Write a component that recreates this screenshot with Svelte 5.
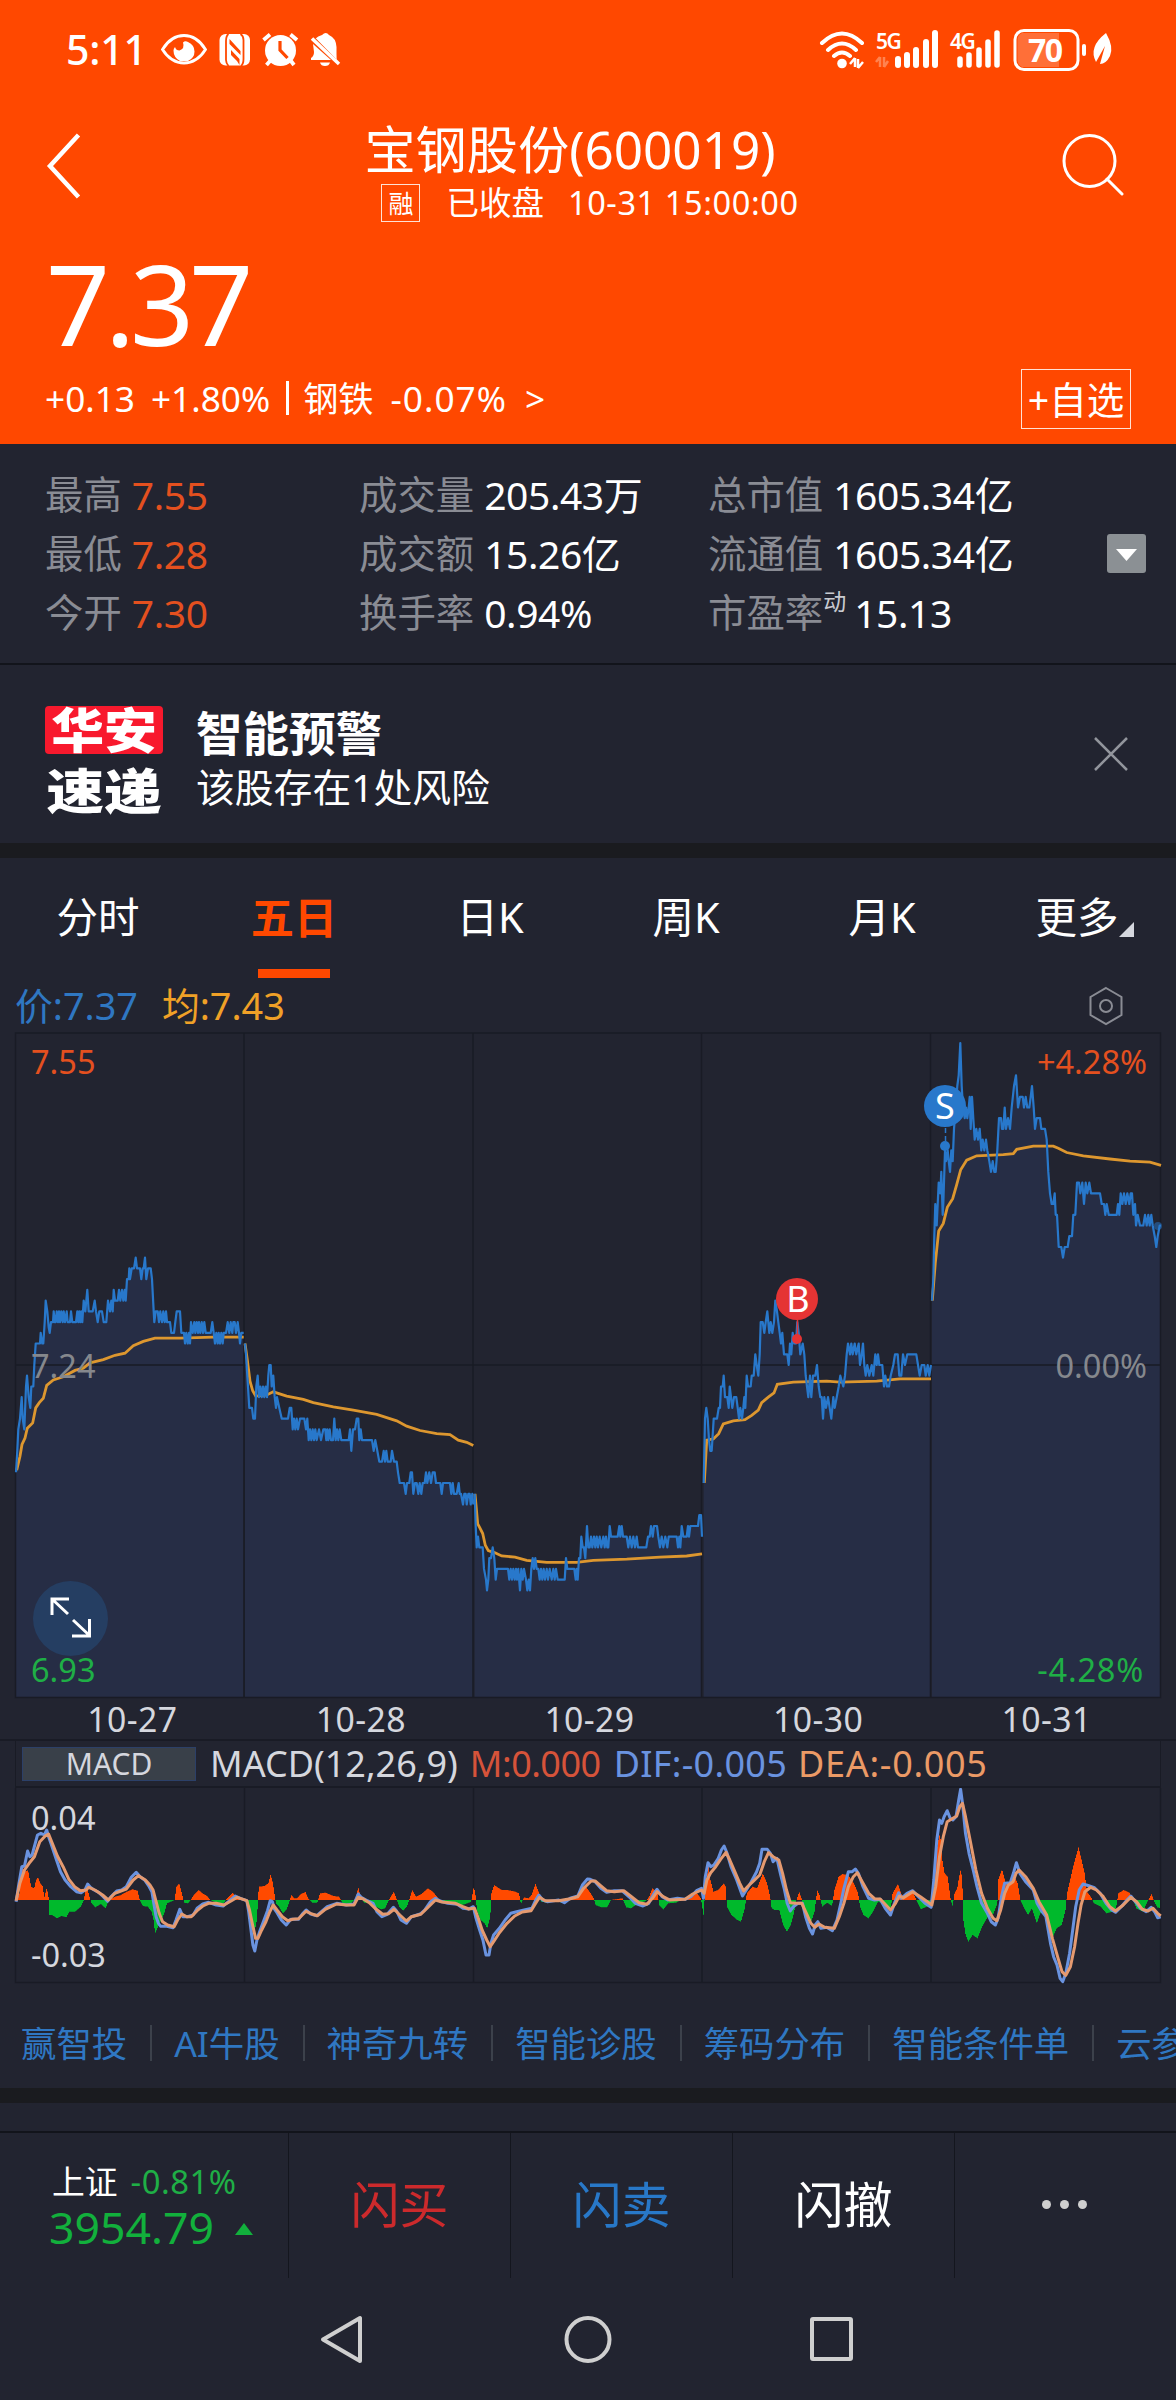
<script lang="ts">
  type Point = [number, number];

  const quotes = [
    [
      { label: '最高', value: '7.55', up: true },
      { label: '最低', value: '7.28', up: true },
      { label: '今开', value: '7.30', up: true },
    ],
    [
      { label: '成交量', value: '205.43万' },
      { label: '成交额', value: '15.26亿' },
      { label: '换手率', value: '0.94%' },
    ],
    [
      { label: '总市值', value: '1605.34亿' },
      { label: '流通值', value: '1605.34亿' },
      { label: '市盈率', sup: '动', value: '15.13' },
    ],
  ];

  const tabs = ['分时', '五日', '日K', '周K', '月K', '更多'];
  const dates = ['10-27', '10-28', '10-29', '10-30', '10-31'];
  const links = ['赢智投', 'AI牛股', '神奇九转', '智能诊股', '筹码分布', '智能条件单', '云参数'];
  let active = $state('五日');

  // "x level" pairs: x in thirds of a pixel, level in cents from the 7.24 base
  const days = [
    {
      from: 0,
      price: '48 -10,52 -8,55 -6,60 -5,65 -3,68 -5,73 -6,78 -2,81 -1,86 -3,91 -4,94 -2,100 -2,103 0,107 2,120 2,122 3,127 2,130 2,134 4,137 6,142 5,146 3.5,149 3,153 4,159 4,161 5,164 4,167 4,170 5,174 4,177 5,180 4,184 5,188 4,191 5,195 4,200 5,203 4,210 4,213 5,217 4,228 4,232 5,235 4,238 5,241 4,244 5,247 4,251 6,256 5,262 7,266 5,278 5,284 6,288 5,293 4,298 5,306 5,311 4,319 4,324 6,330 5,334 6,338 5,341 7,345 6,353 6,357 7,361 6,366 7,370 6,374 7,377 6,381 8,386 8,388 9,390 8,395 9,402 9,407 10,411 9,420 9,424 8,428 9,431 9,435 10,439 8,444 9,452 9,456 8,461 5,463 4,467 5,473 5,477 4,481 5,486 4,490 5,494 4,498 5,501 4,510 4,514 3,522 3,526 4,530 5,540 5,544 3,552 3,555 2,559 3,563 2,567 3,570 2,573 4,578 3,583 4,586 3,590 4,594 3,597 4,601 3,605 4,609 3,613 4,617 3,632 3,637 4,641 3,645 2,649 3,653 2,656 3,660 2,664 3,668 2,671 3,678 3,683 4,688 3,692 4,697 3,700 4,704 4,708 3,713 4,717 3,720 2,724 3,731 3',
      avg: '50 -9.8,60 -8.5,66 -7.4,75 -6.8,82 -5.9,98 -5.4,107 -4,118 -3.5,130 -3.1,140 -1.9,160 -1.4,190 -1.1,225 -.5,250 -.3,270 .2,310 .5,345 .9,375 1.1,400 1.8,430 2.2,465 2.5,540 2.5,640 2.6,731 2.6',
    },
    {
      from: 0,
      price: '735 2,738 1,742 -1,748 -4,756 -4,760 -5,765 -5,769 -2,773 -1,777 -3,781 -2,785 -3,789 -2,793 -3,797 -2,801 -3,805 -1,808 0,812 0,815 -2,820 -1,824 -3,828 -4,831 -3,838 -4,845 -5,864 -5,869 -4,874 -4,878 -6,882 -5,886 -6,890 -5,894 -6,900 -5,913 -5,918 -6,922 -5,926 -7,930 -6,934 -7,938 -6,942 -7,946 -6,950 -7,957 -6,963 -7,970 -6,976 -6,979 -7,982 -6,985 -7,989 -6,993 -7,999 -7,1003 -5,1007 -7,1011 -6,1015 -7,1019 -6,1024 -7,1046 -7,1050 -6,1054 -8,1059 -6,1065 -6,1070 -5,1075 -5,1078 -7,1082 -6,1086 -7,1116 -7,1121 -8,1126 -7,1132 -8,1138 -9,1146 -9,1151 -8,1155 -9,1159 -8,1163 -9,1172 -9,1176 -8,1182 -9,1190 -9,1194 -10,1199 -11,1212 -11,1217 -12,1221 -11,1228 -11,1232 -10,1236 -10,1240 -12,1245 -11,1250 -11,1255 -12,1259 -11,1264 -12,1268 -11,1274 -11,1278 -10,1282 -11,1288 -10,1293 -11,1298 -10,1304 -10,1308 -11,1321 -11,1325 -12,1329 -11,1350 -11,1354 -12,1358 -11,1362 -12,1370 -12,1376 -11,1379 -12,1383 -12,1389 -13,1393 -12,1397 -12,1400 -13,1405 -12,1409 -12,1412 -13,1417 -12,1420 -13',
      avg: '735 2,742 .5,750 -1.5,758 -2.4,767 -2.9,800 -2.8,820 -2.5,860 -2.9,910 -3.2,940 -3.5,1000 -3.9,1060 -4.2,1130 -4.6,1190 -5.2,1220 -5.7,1260 -6.1,1310 -6.4,1350 -6.5,1375 -7,1400 -7.2,1420 -7.5',
    },
    {
      from: 1380,
      price: '44 -12,47 -15,50 -17,54 -16,58 -17,68 -17,72 -19,78 -20,81 -21,85 -20,88 -18,93 -18,98 -17,103 -18,107 -20,111 -19,144 -19,148 -20,152 -19,156 -20,160 -19,164 -20,168 -19,171 -20,175 -19,180 -21,184 -19,188 -20,192 -19,198 -20,202 -21,206 -20,210 -21,214 -19,218 -18,222 -19,226 -18,230 -19,235 -19,239 -20,243 -19,247 -20,251 -19,255 -20,260 -19,264 -20,269 -19,275 -20,280 -19,284 -20,288 -19,293 -20,314 -20,318 -18,322 -19,343 -19,347 -20,350 -19,353 -20,357 -18,361 -18,364 -16,368 -17,372 -17,376 -18,381 -15,385 -17,389 -17,393 -16,397 -17,402 -16,406 -17,410 -16,414 -17,419 -16,424 -17,430 -16,434 -17,438 -16,442 -17,445 -17,449 -15,453 -16,473 -16,478 -15,481 -16,485 -15,489 -16,500 -16,505 -17,510 -16,515 -17,520 -16,525 -17,530 -16,534 -17,559 -17,564 -16,569 -16,573 -15,578 -16,582 -15,591 -15,595 -16,600 -17,605 -16,610 -17,616 -16,622 -17,626 -16,650 -16,654 -17,658 -16,661 -17,665 -15,670 -16,680 -16,684 -15,687 -16,691 -15,714 -15,718 -14,723 -14,726 -16',
      avg: '45 -12,53 -14.8,60 -15.2,68 -15.7,76 -16.8,85 -17.3,105 -17.5,125 -17.8,165 -17.9,200 -18.2,260 -18.4,350 -18.4,400 -18.2,500 -18.1,600 -17.9,680 -17.8,726 -17.6',
    },
    {
      from: 1380,
      price: '731 -11,735 -5,739 -4,743 -5,747 -7,751 -8,755 -8,761 -5,771 -5,776 -4,780 -4,783 -2,788 -2,791 -1,795 -3,802 -3,806 -4,809 -2,813 -3,817 -4,822 -3,829 -3,833 -4,837 -5,841 -4,846 -5,850 -4,853 -3,856 -4,860 -1,864 -2,872 -2,875 -1,881 -1,886 1,890 0,895 -1,899 1,902 4,908 4,913 3,917 4,922 5,928 3,932 4,937 3,942 4,946 6,951 5,955 4,959 3,963 2,967 3,972 1,982 1,986 0,990 2,994 1,998 3,1003 2,1008 2,1012 4,1016 3,1021 1,1028 2,1033 1,1037 -1,1041 -2,1045 -3,1050 -1,1054 -3,1059 -1,1066 -1,1071 0,1076 -2,1081 -3,1085 -3,1089 -5,1093 -3,1098 -4,1104 -3,1109 -4,1114 -5,1120 -3,1124 -4,1130 -3,1136 -2,1141 -1,1150 -2,1155 -1,1160 1,1164 2,1170 1,1174 2,1178 1,1184 2,1189 1,1196 2,1200 0,1205 1,1209 2,1213 0,1217 -1,1222 0,1228 -1,1235 0,1240 -1,1246 1,1250 0,1254 1,1258 0,1267 0,1272 -2,1276 -1,1281 -2,1287 -2,1292 -1,1300 0,1305 1,1313 1,1318 -1,1324 -1,1329 1,1335 0,1342 1,1369 1,1374 0,1379 -1,1385 0,1393 0,1397 -1,1403 0,1408 -1,1413 0',
      avg: '733 -11,740 -7,760 -6.9,776 -6.4,790 -5.5,820 -5.2,855 -5.1,875 -4.7,895 -4.2,905 -3.5,925 -3,942 -2.6,952 -1.8,1000 -1.6,1100 -1.5,1140 -1.6,1250 -1.5,1320 -1.3,1413 -1.3',
    },
    {
      from: 2640,
      price: '156 6,160 8,163 12,166 15,170 13,173 15,176 17,181 16,184 18,188 14,190 15,195 20,198 19,203 20,206 19,210 18,214 20,218 19,222 22,227 24,232 26,236 27,241 30,245 26,249 24,254 23,258 24,262 23,266 24,269 25,272 22,276 25,280 23,284 21,289 22,294 21,299 22,304 20,308 21,313 20,318 21,322 20,328 19,333 18,338 19,343 18,347 18,352 20,357 23,363 23,366 22,370 22,374 24,378 22,384 23,390 22,395 24,402 26,408 27,414 24,420 25,428 25,432 24,437 25,442 24,448 24,452 25,456 26,461 24,465 22,470 23,480 23,484 22,495 22,500 21,505 18,510 16,515 15,520 15,524 16,527 14,531 14,536 11,544 11,549 10,554 11,563 11,568 12,576 12,580 14,586 14,591 17,597 17,601 16,607 17,612 15,617 17,622 16,628 17,633 16,660 16,665 15,672 15,676 14,680 15,686 14,710 14,714 15,718 14,722 16,727 15,732 16,737 15,742 16,748 15,752 16,756 16,760 14,765 15,768 13,773 14,780 13,790 13,795 14,800 13,805 14,809 13,814 14,818 13,824 12,829 11,833 12,839 13,843 13',
      avg: '157 6,166 9.5,176 12.5,190 13.2,202 14.7,218 15.5,230 16.8,242 18.2,260 19.1,290 19.5,370 19.6,400 19.7,410 20.1,460 20.4,520 20.4,535 20.2,560 19.8,610 19.5,690 19.2,750 19,810 18.9,843 18.6',
    },
  ];

  const difLeft = '42 635,48 590,57 530,64 528,72 483,78 500,84 495,92 460,98 435,107 430,116 435,122 420,127 440,133 460,146 505,158 545,170 570,185 590,200 605,212 608,222 600,229 582,236 592,246 600,258 607,270 620,281 634,292 618,305 603,318 600,330 590,343 562,356 547,366 560,378 570,390 590,397 605,402 640,408 680,414 700,420 709,436 709,452 713,460 690,470 658,478 680,490 680,505 675,515 655,530 642,545 637,565 645,583 648,600 632,615 618,628 625,645 632,650 665,656 720,661 765,666 783,672 748,680 720,690 690,699 662,706 632,712 635,716 655,724 668,735 690,748 705,760 688,780 688,790 672,800 660,812 672,828 677,840 665,855 650,880 640,905 645,925 642,936 612,944 622,960 632,975 640,985 665,998 680,1012 673,1028 652,1036 662,1048 690,1062 700,1075 680,1098 672,1110 660,1125 635,1138 625,1150 633,1170 640,1195 643,1210 655,1225 657,1237 650,1243 680,1252 715,1262 750,1270 795,1278 795,1283 760,1290 735,1305 715,1320 690,1335 670,1350 665,1370 660,1390 655,1400 630,1408 615,1418 630,1430 635,1460 630,1475 638,1490 625,1510 618,1522 585,1535 567';
  const difRight = '37 568,50 575,65 595,80 607,100 602,120 602,140 622,155 640,175 648,190 640,205 608,212 598,225 620,240 630,265 625,285 628,300 620,315 602,328 595,333 625,338 560,345 518,352 530,360 525,372 505,380 480,387 468,395 490,405 530,420 570,435 618,445 600,458 575,472 545,480 520,486 478,500 478,508 490,515 515,525 505,535 555,545 600,552 640,560 663,568 650,580 640,592 640,600 680,610 715,618 732,625 705,632 695,640 715,655 712,670 722,682 690,692 640,700 595,712 545,722 545,730 537,738 550,750 590,765 625,780 630,795 628,808 655,822 675,832 640,843 608,850 625,865 610,880 602,895 620,912 640,928 652,935 570,943 450,950 390,956 400,962 380,970 362,978 385,985 390,993 380,1000 330,1005 298,1010 340,1018 430,1027 490,1038 540,1048 590,1060 640,1075 670,1085 695,1096 705,1103 685,1112 620,1120 580,1135 578,1143 550,1151 518,1160 550,1175 575,1195 600,1205 640,1215 660,1228 680,1240 760,1248 800,1257 825,1265 865,1272 875,1280 850,1290 790,1298 720,1306 650,1315 600,1325 582,1340 587,1355 593,1370 610,1385 640,1400 660,1410 667,1425 650,1440 630,1450 618,1462 635,1475 655,1490 665,1503 652,1512 665,1520 683,1528 680';
  const deaLeft = '42 632,52 580,64 540,76 520,90 500,104 455,118 438,127 432,135 455,150 498,165 530,180 568,195 590,210 602,225 600,232 592,248 600,268 615,283 630,300 610,330 597,348 570,362 557,380 570,392 585,400 600,408 635,416 670,425 695,438 705,455 710,464 690,475 672,488 680,500 680,515 662,530 648,545 640,565 640,585 645,605 632,620 622,645 632,652 660,660 705,668 745,674 745,684 720,695 695,705 665,714 645,724 660,738 680,752 692,765 688,780 686,800 664,815 672,830 677,850 658,880 642,905 645,925 645,936 622,948 626,965 638,980 655,1000 673,1015 671,1030 658,1045 675,1062 693,1075 680,1100 673,1120 650,1138 630,1155 636,1190 640,1210 650,1225 657,1240 655,1250 685,1260 720,1272 750,1281 770,1290 755,1305 728,1325 700,1345 678,1365 666,1388 662,1400 640,1410 622,1425 632,1460 632,1490 626,1510 620,1525 595,1545 573';
  const deaRight = '50 573,65 588,80 602,100 605,125 602,145 620,165 638,185 643,200 625,212 605,228 620,245 630,285 628,305 612,328 600,335 610,342 570,352 548,365 530,378 508,392 487,402 510,415 545,428 580,438 603,450 588,465 572,480 555,492 515,503 488,515 500,530 510,540 550,550 600,560 638,575 640,590 640,602 670,614 700,624 712,635 702,650 712,675 715,688 680,700 640,712 590,725 560,735 548,748 575,765 610,780 626,795 627,810 645,822 660,835 640,845 618,855 624,880 605,900 620,930 645,940 590,950 500,960 440,970 395,985 385,995 378,1003 350,1010 340,1018 380,1030 450,1045 540,1060 610,1075 655,1090 685,1100 692,1110 660,1120 610,1130 585,1142 575,1150 550,1158 540,1175 560,1195 595,1210 635,1230 675,1245 745,1260 805,1270 845,1280 856,1292 830,1303 770,1312 700,1320 645,1330 605,1345 592,1360 600,1378 620,1395 650,1410 663,1430 645,1450 622,1465 635,1480 658,1495 663,1508 655,1520 670,1528 678';
  const histLeft = '42 0,50 20,56 100,66 85,72 90,80 40,88 35,93 60,98 68,104 50,111 40,114 5,121 37,126 5,128 -45,135 -45,148 -55,160 -48,172 -52,180 -35,195 -35,210 -20,218 0,222 30,228 30,233 8,238 -10,248 -22,262 -12,275 -25,283 0,300 10,315 15,330 25,345 32,358 28,364 0,372 -18,385 -20,395 -35,400 -60,404 -100,412 -80,420 -60,428 -40,435 -10,445 -5,455 0,460 40,467 50,474 20,480 -8,490 -10,497 0,505 15,518 30,530 18,540 12,548 0,565 -8,583 -10,592 5,607 22,616 8,630 2,645 -3,650 -40,656 -80,664 -95,670 -60,673 0,675 40,690 42,700 50,706 77,712 50,717 10,720 -10,728 -20,738 -40,748 -28,755 -5,760 15,768 5,775 5,785 18,797 24,804 5,815 -8,828 -8,835 20,850 22,870 12,885 10,893 -8,905 -12,918 -8,928 5,935 38,941 10,950 -8,965 -8,980 -20,995 -28,1005 -25,1015 0,1028 25,1036 0,1042 -20,1052 -32,1062 -20,1068 0,1076 30,1086 10,1100 18,1117 35,1130 25,1142 8,1150 -5,1175 -8,1195 -12,1205 -15,1220 -10,1230 -5,1237 40,1242 10,1245 -30,1255 -60,1265 -70,1272 -85,1280 -50,1283 20,1290 45,1310 30,1325 30,1345 25,1355 20,1360 -12,1368 8,1380 5,1388 15,1398 48,1406 25,1412 -5,1430 -8,1450 -3,1475 -10,1490 8,1505 5,1515 20,1530 40';
  const histRight = '37 20,45 5,50 -15,65 -22,80 -22,90 0,120 5,130 -22,142 -25,155 -15,170 -8,182 -2,190 10,198 35,212 22,216 -15,227 -28,240 -10,260 -8,280 5,300 12,315 20,325 5,332 -45,337 40,345 100,350 60,358 25,370 30,385 50,390 40,393 -20,405 -45,420 -60,430 -65,440 -25,445 20,460 40,472 35,487 80,498 50,506 10,510 -25,518 -30,530 -30,540 -75,550 -95,560 -75,568 -40,575 0,582 25,588 5,595 -30,605 -75,615 -60,622 -35,626 0,629 30,635 15,642 -20,655 -8,668 -18,674 30,685 70,695 78,710 75,725 50,736 20,741 -20,750 -45,763 -55,775 -35,788 -5,800 -10,812 -25,822 -20,826 20,840 48,850 15,865 15,880 22,888 0,900 -28,915 -20,928 -15,932 30,938 120,946 180,950 200,956 120,962 80,970 70,978 0,983 -18,988 20,995 35,1000 70,1005 95,1009 30,1011 -60,1017 -105,1024 -125,1035 -105,1048 -115,1060 -80,1075 -50,1090 -40,1100 -10,1102 60,1112 92,1122 50,1135 50,1145 70,1153 50,1160 0,1170 -25,1180 -45,1190 -25,1203 -70,1212 -40,1225 -40,1235 -90,1245 -110,1255 -85,1268 -75,1278 -30,1282 20,1290 60,1298 100,1305 130,1312 158,1320 120,1328 80,1334 25,1345 8,1352 -10,1370 -20,1385 -40,1400 -35,1410 -25,1416 20,1430 30,1445 22,1455 0,1463 -25,1480 -35,1492 -5,1503 18,1510 -5,1518 -22,1528 -25';

  const parse = (s: string): Point[] => s.split(',').map((p) => p.split(' ').map(Number) as Point);
  const toPath = (pts: Point[]) => 'M' + pts.map(([x, y]) => `${x.toFixed(1)} ${y.toFixed(1)}`).join('L');

  // price chart: 10.73px for each cent, base line at 333
  const scaleDay = (s: string, from: number): Point[] =>
    parse(s).map(([x, v]) => [(x + from) / 3, 333 - v * 10.73]);

  const lines = days.map((d) => {
    const pts = scaleDay(d.price, d.from);
    return {
      price: toPath(pts),
      area: `${toPath(pts)}V665H${pts[0][0].toFixed(1)}Z`,
      avg: toPath(scaleDay(d.avg, d.from)),
    };
  });

  // MACD pane: both halves share one scale, zero line at 112
  const K = 1568 / 600;
  const join = (l: string, r: string): Point[] => [
    ...parse(l).map(([x, v]): Point => [x / K, v]),
    ...parse(r).map(([x, v]): Point => [576 + x / K, v]),
  ];
  const macdLine = (l: string, r: string) => toPath(join(l, r).map(([x, v]) => [x, 112 + (v - 630) / 3]));

  const dif = macdLine(difLeft, difRight);
  const dea = macdLine(deaLeft, deaRight);

  const hist = join(histLeft, histRight);
  let bull = '';
  let bear = '';
  let seg = 0;
  for (let x = 16; x < 1160; x++) {
    while (seg < hist.length - 2 && hist[seg + 1][0] < x) seg++;
    const [x0, v0] = hist[seg];
    const [x1, v1] = hist[seg + 1];
    const v = (v0 + ((v1 - v0) * (x - x0)) / (x1 - x0)) / 3;
    const bar = `M${x} 112v${(-v).toFixed(1)}h1V112z`;
    if (v > 0) bull += bar;
    else bear += bar;
  }

  const grid = [244, 473, 701.5, 930.5];
</script>

<main>
  <header>
    <div class="status">
      <span class="clock">5:11</span>
      <svg class="sys" width="182" height="40" viewBox="0 0 182 40" fill="none" stroke="#fff">
        <path d="M2.500 19.500Q11 5.500 24 5.500T45.500 19.500Q37 33 24 33T2.500 19.500Z" stroke-width="2.800" />
        <path d="M23 12.500Q25 10.500 28 12Q34.500 15 34.500 21.500T28 31H20Q13.500 27.500 13.500 20.500Q13.500 18.500 15 17Q16 20.500 19.500 20.500Q25 18.500 23 12.500Z" fill="#fff" stroke="none" />
        <rect x="59.500" y="4" width="30.500" height="31.500" rx="6" fill="#fff" stroke="none" />
        <path d="M68.500 4Q66 6 66 11V30Q66 33 68.500 36M80.500 4Q83.500 6 83.500 10V29Q83.500 34 81 36" stroke="#ff4800" stroke-width="1.800" />
        <path d="M69.500 9L80.500 21V25L69.500 14ZM71 20L79.500 29V35L77 31L71 25Z" fill="#ff4800" stroke="none" />
        <circle cx="120.500" cy="20.500" r="15.500" fill="#fff" stroke="none" />
        <path d="M103.500 10L110 4.500M137 10L130.500 4.500M110 31L106.500 35M131 31L134 35" stroke-width="3.800" />
        <path d="M120 11V20L127.500 28" stroke="#ff4800" stroke-width="3.200" />
        <path d="M155 9L178 32Q176 29 176.500 24V17Q176 8 169 5Q166 1 162 5Q158 6 155 9Z M153 14L171 30H151V28Q154 26 154 22Z M160 32.500H170Q169 36 165 36T160 32.500Z" fill="#fff" stroke="none" />
        <path d="M154 8L181 35.500" stroke="#ff4800" stroke-width="2" />
        <path d="M152 8.500L179 34" stroke-width="3.500" />
      </svg>
      <svg class="sys right" width="296" height="44" viewBox="0 0 296 44" fill="none" stroke="#fff">
        <path d="M3 15Q23 -4 43 15M9 22Q23 9 37 22M15 28Q23 21 31 28" stroke-width="4" stroke-linecap="round" />
        <circle cx="23" cy="35.500" r="4.800" fill="#fff" stroke="none" />
        <path d="M36 30V39M31 36L36 30M39 40V31M39 40L44 34" stroke-width="2.500" />
        <path d="M61 29V39M57 34L61 29M65 39V29M65 39L69 33" stroke="#ff8350" stroke-width="2.500" />
        <path d="M79 31V37M88 27V37M97 22V37M107 14V37M116 5V37" stroke-width="6" stroke-linecap="round" />
        <path d="M141 31V37M150 27V37M160 22V37M169 14V37M178 5V37" stroke-width="5.500" stroke-linecap="round" />
        <rect x="196" y="2.500" width="63" height="39" rx="9" stroke-width="3" />
        <path d="M203 5H240V39H203Q198.500 37 198.500 32V12Q198.500 7 203 5Z" fill="#ff6f38" stroke="none" />
        <path d="M265 18V26" stroke-width="4" stroke-linecap="round" />
        <path d="M287 5Q295 19 291 28Q287 36 281 36L286 18L277 34Q269 19 287 5Z" fill="#fff" stroke="none" />
        <text x="57" y="21" class="net">5G</text>
        <text x="131" y="21" class="net">4G</text>
        <text x="209" y="34" class="batt">70</text>
      </svg>
    </div>

    <div class="title-bar">
      <svg width="36" height="66" viewBox="0 0 36 66" fill="none" stroke="#fff" stroke-width="4.500">
        <path d="M32.500 2L4 33L32.500 64" />
      </svg>
      <div class="title">
        <h1>宝钢股份(600019)</h1>
        <div class="sub">
          <span class="tag">融</span>
          <span>已收盘</span>
          <span class="time">10-31 15:00:00</span>
        </div>
      </div>
      <svg width="62" height="68" viewBox="0 0 62 68" fill="none" stroke="#fff" stroke-width="3">
        <ellipse cx="27.500" cy="29" rx="25.500" ry="25.500" />
        <path d="M45 47L60 62" stroke-linecap="round" />
      </svg>
    </div>

    <div class="price">7.37</div>
    <div class="change">
      <span>+0.13</span><span class="pct">+1.80%</span><span class="bar"></span><span>钢铁</span><span class="sector">-0.07%</span><span>&gt;</span>
      <button class="add">+自选</button>
    </div>
  </header>

  <section class="quotes">
    {#each quotes as column}
      <div class="column">
        {#each column as q}
          <div class="quote">
            <span class="label">{q.label}</span>{#if q.sup}<sup>{q.sup}</sup>{/if}<span class="value" class:up={q.up}>{q.value}</span>
          </div>
        {/each}
      </div>
    {/each}
    <svg class="more" width="39" height="39" viewBox="0 0 39 39">
      <rect width="39" height="39" rx="3" fill="#8b9094" />
      <path d="M9 15H30L19.500 27Z" fill="#fff" />
    </svg>
  </section>

  <section class="alert">
    <div class="brand">
      <span class="red"><b>华安</b></span>
      <span class="white"><b>速递</b></span>
    </div>
    <div class="message">
      <strong>智能预警</strong>
      <span>该股存在1处风险</span>
    </div>
    <svg width="36" height="36" viewBox="0 0 36 36" stroke="#92959c" stroke-width="2.500">
      <path d="M2 2L34 34M34 2L2 34" />
    </svg>
  </section>

  <nav class="tabs">
    {#each tabs as tab}
      <button class:active={active === tab} onclick={() => (active = tab)}>
        {tab}{#if tab === '更多'}<i class="corner"></i>{/if}
      </button>
    {/each}
  </nav>

  <div class="legend">
    <span class="now">价:7.37</span>
    <span class="mean">均:7.43</span>
    <svg width="36" height="40" viewBox="0 0 36 40" fill="none" stroke="#8a8c94" stroke-width="2">
      <path d="M18 2L33.500 11V29L18 38L2.500 29V11Z" />
      <circle cx="18" cy="20" r="6" />
    </svg>
  </div>

  <svg class="chart" width="1176" height="667" viewBox="0 0 1176 667" fill="none">
    {#each lines as l}
      <path d={l.area} fill="#262d45" />
    {/each}
    <path d="M15.500 1H1160.500V665.500H15.500ZM15.500 333H1160" stroke="#191b25" stroke-width="1.500" />
    {#each grid as x}
      <path d="M{x} 1V665" stroke="#191b25" stroke-width="1.500" />
    {/each}
    {#each lines as l}
      <path d={l.avg} stroke="#dd972f" stroke-width="2.800" />
      <path d={l.price} stroke="#2878cb" stroke-width="2.200" stroke-linejoin="round" />
    {/each}
    <circle cx="1158" cy="194" r="4" fill="#2878cb" opacity=".5" />

    <circle cx="70.500" cy="586.500" r="37.500" fill="#253e62" />
    <path d="M52 583V567H69M52.500 567.500L68 582M73 588L89 603M89.500 587V604H72" stroke="#fff" stroke-width="3" />

    <path d="M797.500 288V303" stroke="#e53434" stroke-width="1.500" />
    <circle cx="797" cy="307" r="5" fill="#e53434" />
    <circle cx="797" cy="267" r="21" fill="#e53434" />
    <text x="798" y="280" class="mark">B</text>
    <path d="M945.500 96V110" stroke="#2878cb" stroke-width="1.500" stroke-dasharray="5 3" />
    <circle cx="945" cy="114" r="5" fill="#2878cb" />
    <circle cx="945" cy="74" r="21" fill="#2878cb" />
    <text x="945" y="87" class="mark">S</text>

    <text x="31" y="41.500" fill="#e4501f">7.55</text>
    <text x="31" y="345.500" fill="#85888d">7.24</text>
    <text x="31" y="650" fill="#1faf46">6.93</text>
    <text x="1147" y="41.500" class="end" fill="#e4501f">+4.28%</text>
    <text x="1147" y="345.500" class="end" fill="#85888d">0.00%</text>
    <text x="1144" y="650" class="end minus" fill="#1faf46">-4.28%</text>
  </svg>

  <div class="dates">
    {#each dates as date}
      <span>{date}</span>
    {/each}
  </div>

  <div class="macd-head">
    <button>MACD</button>
    <span>MACD(12,26,9)</span>
    <span class="m">M:0.000</span>
    <span class="dif">DIF:-0.005</span>
    <span class="dea">DEA:-0.005</span>
  </div>

  <svg class="macd" width="1176" height="196" viewBox="0 0 1176 196" fill="none">
    <path d="M15.500 0V194.500H1160.500V0" stroke="#191b25" stroke-width="1.500" />
    {#each grid as x}
      <path d="M{x + 0.5} 0V194" stroke="#191b25" stroke-width="1.500" />
    {/each}
    <path d={bull} fill="#ff4a00" />
    <path d={bear} fill="#00b92c" />
    <path d={dif} stroke="#6a93e0" stroke-width="3" stroke-linejoin="round" />
    <path d={dea} stroke="#e59a70" stroke-width="3" stroke-linejoin="round" />
    <text x="31" y="42" fill="#d5d7de">0.04</text>
    <text x="31" y="179" fill="#d5d7de">-0.03</text>
  </svg>

  <div class="links">
    {#each links as link}
      <a href="#tool">{link}</a>
    {/each}
  </div>

  <div class="band"></div>

  <footer>
    <div class="index">
      <div class="name">上证<span>-0.81%</span></div>
      <div class="points">3954.79<i></i></div>
    </div>
    <button class="buy">闪买</button>
    <button class="sell">闪卖</button>
    <button class="cancel">闪撤</button>
    <button class="dots" aria-label="更多"><i></i><i></i><i></i></button>
  </footer>

  <div class="system-nav">
    <svg width="540" height="50" viewBox="0 0 540 50" fill="none" stroke="#cfcfcf" stroke-width="4" stroke-linejoin="round">
      <path d="M5 25.500L42 4V47Z" />
      <circle cx="270" cy="25.500" r="21.500" />
      <rect x="494" y="5" width="39" height="40" rx="1" />
    </svg>
  </div>
</main>

<style>
  :global(body) {
    margin: 0;
    background: #222430;
  }

  main {
    width: 1176px;
    height: 2400px;
    overflow: hidden;
    display: flex;
    flex-direction: column;
    background: #222430;
    color: #fff;
    font-family: "Noto Sans", "Noto Sans CJK SC", sans-serif;
    font-size: 38.4px;
    line-height: 1.2;
  }

  main > * {
    flex-shrink: 0;
  }

  button {
    background: none;
    border: 0;
    padding: 0;
    color: inherit;
    font: inherit;
  }

  svg {
    display: block;
    flex-shrink: 0;
  }

  header {
    height: 444px;
    background: #ff4800;
    box-sizing: border-box;
  }

  .status {
    display: flex;
    align-items: center;
    height: 100px;
    padding: 0 61px 0 66px;
  }

  .clock {
    width: 94px;
    font-size: 41px;
    font-weight: 500;
    letter-spacing: -0.2px;
  }

  .right {
    margin-left: auto;
  }

  .title-bar {
    display: flex;
    justify-content: space-between;
    align-items: center;
    height: 132px;
    padding: 0 52px 0 46px;
  }

  .title {
    display: flex;
    flex-direction: column;
    align-items: center;
    padding-top: 13px;
    margin-right: 4px;
  }

  h1 {
    margin: 0;
    font-size: 51.2px;
    font-weight: 400;
    line-height: 60px;
  }

  .sub {
    display: flex;
    align-items: center;
    height: 48px;
    margin-left: 40px;
    font-size: 32.5px;
  }

  .tag {
    width: 37px;
    height: 36px;
    margin-right: 26px;
    border: 1px solid #ffe2d5;
    font-size: 25px;
    line-height: 36px;
    text-align: center;
  }

  .time {
    margin-left: 24px;
    letter-spacing: 0.6px;
  }

  .price {
    height: 132px;
    padding-left: 46px;
    font-size: 112px;
    line-height: 141px;
    letter-spacing: -5px;
  }

  .change {
    display: flex;
    align-items: center;
    height: 70px;
    padding: 0 45px;
    font-size: 35.2px;
  }

  .change span {
    position: relative;
    top: -1px;
  }

  .pct {
    margin-left: 16px;
  }

  .bar {
    width: 3px;
    height: 34px;
    margin: 0 14px 0 16px;
    background: #fff;
  }

  .sector {
    margin: 0 18px 0 17px;
    letter-spacing: 1px;
  }

  .add {
    width: 110px;
    height: 60px;
    margin-left: auto;
    border: 1px solid #ffe2d5;
    font-size: 37.5px;
  }

  .quotes {
    display: flex;
    height: 221px;
    padding-left: 45px;
    border-bottom: 2px solid #12141b;
    box-sizing: border-box;
  }

  .column {
    width: 349px;
    padding-top: 21px;
  }

  .column:first-child {
    width: 314px;
  }

  .quote {
    display: flex;
    height: 59px;
    line-height: 59px;
  }

  .label {
    color: #8a8c94;
  }

  sup {
    color: #c9cbd1;
    font-size: 23px;
    line-height: 36px;
    vertical-align: baseline;
  }

  .value {
    margin-left: 10px;
    font-size: 39px;
    letter-spacing: -0.4px;
  }

  sup + .value {
    margin-left: 8px;
  }

  .value.up {
    color: #e4501f;
  }

  .more {
    margin: 90px 30px 0 auto;
  }

  .alert {
    display: flex;
    align-items: center;
    height: 193px;
    padding: 0 47px 0 45px;
    border-bottom: 15px solid #1a1b1f;
    box-sizing: border-box;
  }

  .brand {
    display: flex;
    flex-direction: column;
    gap: 12px;
    width: 118px;
    padding-top: 14px;
    font-size: 48px;
    line-height: 48px;
    text-align: center;
  }

  .brand b {
    display: inline-block;
    font-weight: 900;
    transform: scaleX(1.1);
  }

  .brand .red {
    height: 48px;
    border-radius: 4px;
    background: #f8192d;
  }

  .brand .white {
    height: 50px;
    line-height: 50px;
  }

  .brand .white b {
    transform: scaleX(1.2);
  }

  .message {
    display: flex;
    flex-direction: column;
    flex: 1;
    padding-top: 13px;
    margin-left: 33px;
  }

  .message strong {
    height: 52px;
    font-size: 46.5px;
    line-height: 52px;
  }

  .message span {
    height: 56px;
    font-size: 38.8px;
    line-height: 56px;
  }

  .tabs {
    display: flex;
    height: 120px;
  }

  .tabs button {
    display: flex;
    justify-content: center;
    width: 196px;
    padding: 36px 0 37px;
    box-sizing: border-box;
    font-size: 41.5px;
    line-height: 47px;
  }

  .tabs button:last-child {
    padding-left: 13px;
  }

  .tabs .active {
    color: #ff4800;
    font-size: 43.2px;
    font-weight: 700;
    background: linear-gradient(#ff4800, #ff4800) center bottom / 72px 9px no-repeat;
  }

  .corner {
    align-self: flex-end;
    width: 0;
    height: 0;
    margin-bottom: 4px;
    border-left: 15px solid transparent;
    border-bottom: 15px solid #d5d7de;
  }

  .legend {
    display: flex;
    align-items: center;
    height: 54px;
    padding: 2px 52px 0 15px;
    box-sizing: border-box;
    font-size: 37.8px;
  }

  .now {
    color: #2f77c2;
  }

  .mean {
    margin-left: 24px;
    color: #f0a127;
  }

  .legend svg {
    margin-left: auto;
  }

  svg text {
    font-size: 32.5px;
  }

  svg .net,
  svg .batt {
    font-size: 21px;
    font-weight: 600;
    letter-spacing: -1.5px;
    fill: #fff;
    stroke: none;
  }

  svg .batt {
    font-size: 32px;
    font-weight: 700;
  }

  svg .end {
    text-anchor: end;
  }

  svg .minus {
    letter-spacing: 0.8px;
  }

  svg .mark {
    fill: #fff;
    font-size: 36px;
    text-anchor: middle;
  }

  .dates {
    display: grid;
    grid-template-columns: repeat(5, 228.6px);
    height: 42px;
    padding-left: 18px;
    border-bottom: 2px solid #191b25;
    box-sizing: border-box;
    color: #d5d7de;
    font-size: 33.8px;
    letter-spacing: 0.4px;
    line-height: 41px;
    text-align: center;
  }

  .macd-head {
    display: flex;
    align-items: center;
    height: 47px;
    margin: 0 15px;
    padding-left: 6px;
    border: 1px solid #191b25;
    border-width: 0 1px 2px;
    box-sizing: border-box;
    color: #d5d7de;
    font-size: 36px;
  }

  .macd-head button {
    width: 174px;
    height: 34px;
    margin-right: 14px;
    border: 1px solid #2c4068;
    background: #394049;
    font-size: 30px;
    line-height: 30px;
  }

  .m {
    margin-left: 12px;
    color: #d6533a;
    letter-spacing: -0.5px;
  }

  .dif {
    margin-left: 13px;
    color: #6a93e0;
    letter-spacing: 0.3px;
  }

  .dea {
    margin-left: 11px;
    color: #eb9a66;
    letter-spacing: 0.7px;
  }

  .links {
    display: flex;
    align-items: center;
    height: 104px;
    padding-top: 13px;
    box-sizing: border-box;
    overflow: hidden;
    font-size: 35.4px;
    white-space: nowrap;
  }

  .links a {
    padding: 0 23px 0 22px;
    border-right: 2px solid #3c414b;
    color: #2f77c2;
    line-height: 36px;
    text-decoration: none;
  }

  .links a:first-child {
    padding-left: 21px;
  }

  .band {
    height: 15px;
    background: #1a1b1f;
  }

  footer {
    display: flex;
    height: 147px;
    margin-top: 28px;
    border-top: 2px solid #12141b;
    box-sizing: border-box;
  }

  .index {
    width: 288px;
    padding: 26px 0 0 49px;
    box-sizing: border-box;
  }

  .name {
    padding-left: 3px;
    font-size: 32.8px;
    line-height: 46px;
  }

  .name span {
    margin-left: 13px;
    color: #1faf46;
    letter-spacing: 0.5px;
  }

  .points {
    display: flex;
    align-items: center;
    color: #12b03c;
    font-size: 44.6px;
    line-height: 44px;
  }

  .points i {
    margin: 4px 0 0 21px;
    border: 9px solid transparent;
    border-top: 0;
    border-bottom: 12px solid #12b03c;
  }

  footer button {
    width: 222px;
    padding-bottom: 3px;
    border-left: 1px solid #14161e;
    box-sizing: border-box;
    font-size: 49px;
  }

  .buy {
    color: #cc2a2c;
  }

  .sell {
    color: #2878c8;
  }

  .dots {
    display: flex;
    align-items: center;
    justify-content: center;
    gap: 9px;
    padding-right: 3px;
  }

  .dots i {
    width: 9px;
    height: 9px;
    border-radius: 50%;
    background: #cfcfcf;
  }

  .system-nav {
    display: flex;
    flex: 1;
    align-items: center;
    justify-content: center;
  }
</style>
